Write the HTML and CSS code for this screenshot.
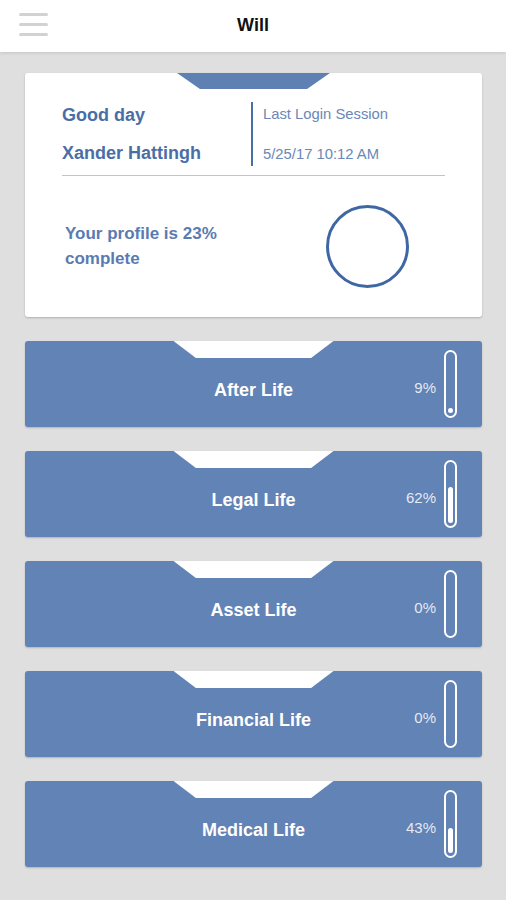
FILE: index.html
```html
<!DOCTYPE html>
<html>
<head>
<meta charset="utf-8">
<link rel="stylesheet" href="styles.css">
</head>
<body>
<header class="topbar">
  <div class="menu"><span></span><span></span><span></span></div>
  <div class="title">Will</div>
  <div></div>
</header>
<main class="content">
  <section class="profile">
    <div class="tab tab-blue"></div>
    <div class="info">
      <div class="greet">
        <div>Good day</div>
        <div>Xander Hattingh</div>
      </div>
      <div class="session">
        <div>Last Login Session</div>
        <div>5/25/17 10:12 AM</div>
      </div>
    </div>
    <div class="rule"></div>
    <div class="progress">
      <div class="ptext">Your profile is 23%<br>complete</div>
      <div class="ring"></div>
    </div>
  </section>

  <section class="cat">
    <div class="tab tab-white"></div>
    <div class="label">After Life</div>
    <div class="meter"><span class="pct">9%</span><div class="thermo"><div class="fill" style="height:9%"></div></div></div>
  </section>
  <section class="cat">
    <div class="tab tab-white"></div>
    <div class="label">Legal Life</div>
    <div class="meter"><span class="pct">62%</span><div class="thermo"><div class="fill" style="height:62%"></div></div></div>
  </section>
  <section class="cat">
    <div class="tab tab-white"></div>
    <div class="label">Asset Life</div>
    <div class="meter"><span class="pct">0%</span><div class="thermo"><div class="fill" style="height:0%"></div></div></div>
  </section>
  <section class="cat">
    <div class="tab tab-white"></div>
    <div class="label">Financial Life</div>
    <div class="meter"><span class="pct">0%</span><div class="thermo"><div class="fill" style="height:0%"></div></div></div>
  </section>
  <section class="cat">
    <div class="tab tab-white"></div>
    <div class="label">Medical Life</div>
    <div class="meter"><span class="pct">43%</span><div class="thermo"><div class="fill" style="height:43%"></div></div></div>
  </section>
</main>
</body>
</html>
```
FILE: styles.css
```css
* { box-sizing: border-box; }
html, body { margin: 0; padding: 0; }
body {
  background: #dfdfdf;
  font-family: "Liberation Sans", Arial, sans-serif;
  width: 506px;
  min-height: 900px;
}
.topbar {
  height: 52px;
  background: #fff;
  display: grid;
  grid-template-columns: 1fr auto 1fr;
  align-items: center;
  box-shadow: 0 1px 3px rgba(0,0,0,0.12);
  position: relative;
  z-index: 1;
}
.menu {
  display: flex;
  flex-direction: column;
  gap: 7px;
  padding-left: 19px;
  margin-top: -4px;
}
.menu span {
  display: block;
  width: 29px;
  height: 3px;
  border-radius: 2px;
  background: #d2d2d2;
}
.title {
  font-size: 18px;
  font-weight: 700;
  color: #111;
  margin-top: -1px;
}
.content {
  padding: 21px 24px 30px 25px;
  display: flex;
  flex-direction: column;
  gap: 24px;
}
.profile {
  background: #fff;
  height: 244px;
  border-radius: 3px;
  box-shadow: 0 1px 2px rgba(0,0,0,0.22);
  display: flex;
  flex-direction: column;
}
.tab {
  align-self: center;
  clip-path: polygon(0 0, 100% 0, 85% 100%, 15% 100%);
}
.tab-blue {
  width: 153px;
  height: 16px;
  background: #5f80b3;
}
.info {
  display: flex;
  margin-top: 13px;
  height: 64px;
}
.greet {
  width: 226px;
  padding-left: 37px;
  display: flex;
  flex-direction: column;
  justify-content: space-between;
  font-size: 18px;
  font-weight: 700;
  color: #4a6ea6;
  line-height: 26px;
}
.session {
  border-left: 2px solid #4a6ea6;
  padding-left: 10px;
  display: flex;
  flex-direction: column;
  justify-content: space-between;
  font-size: 14.8px;
  color: #6a87b7;
  line-height: 24px;
}
.rule {
  height: 1px;
  background: #c4c4c4;
  margin: 9px 37px 0 37px;
}
.progress {
  flex: 1;
  display: flex;
  align-items: center;
}
.ptext {
  width: 301px;
  padding-left: 40px;
  font-size: 17px;
  font-weight: 700;
  line-height: 25px;
  color: #5a7bb2;
  margin-top: -2px;
}
.ring {
  width: 83px;
  height: 83px;
  border-radius: 50%;
  border: 3px solid #3f67a4;
}
.cat {
  height: 86px;
  background: #6283b6;
  border-radius: 3px;
  box-shadow: 0 1px 2px rgba(0,0,0,0.2);
  display: grid;
  grid-template-columns: 1fr auto 1fr;
  grid-template-rows: 17px 1fr;
}
.tab-white {
  grid-column: 1 / -1;
  grid-row: 1;
  justify-self: center;
  width: 160px;
  height: 17px;
  background: #fff;
  clip-path: polygon(0 0, 100% 0, 86% 100%, 14% 100%);
}
.label {
  grid-column: 2;
  grid-row: 2;
  align-self: center;
  margin-bottom: 4px;
  color: #fff;
  font-size: 18px;
  font-weight: 700;
}
.meter {
  grid-column: 3;
  grid-row: 1 / 3;
  display: flex;
  justify-content: flex-end;
  align-items: center;
  gap: 8px;
  padding-right: 25px;
}
.pct {
  color: rgba(255,255,255,0.85);
  font-size: 15px;
  margin-top: 6px;
}
.thermo {
  width: 13px;
  height: 68px;
  border: 2px solid #fff;
  border-radius: 7px;
  padding: 3px 0;
  display: flex;
  flex-direction: column;
  justify-content: flex-end;
  align-items: center;
}
.fill {
  width: 5px;
  border-radius: 3px;
  background: #fff;
}
```
